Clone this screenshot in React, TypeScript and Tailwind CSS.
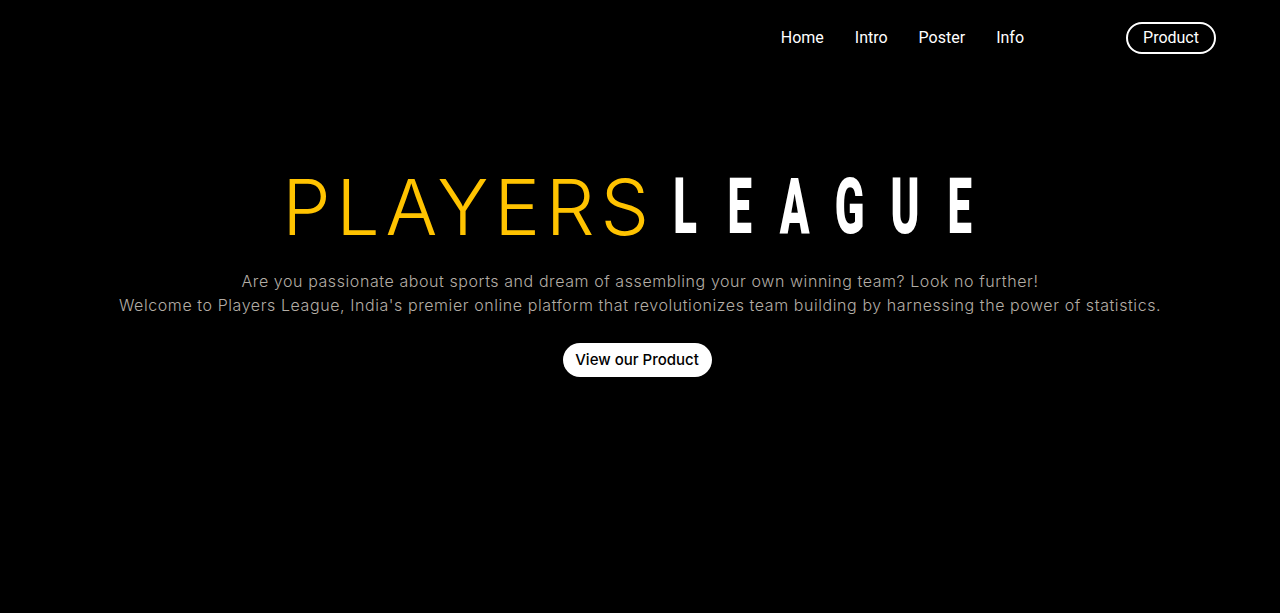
import React from "react";

const league = ["L", "E", "A", "G", "U", "E"];

export default function App() {
  return (
    <div className="min-h-[613px] w-full bg-black text-white">
      <header className="flex h-[76px] items-center justify-end pr-16" style={{ fontFamily: "Roboto, 'Liberation Sans', sans-serif" }}>
        <nav className="flex items-center gap-[31px] text-[16px] text-white">
          <a className="leading-none">Home</a>
          <a className="leading-none">Intro</a>
          <a className="leading-none">Poster</a>
          <a className="leading-none">Info</a>
        </nav>
        <button className="ml-[102px] flex h-8 w-[90px] items-center justify-center rounded-full border-2 border-white text-[16px] leading-none text-white">
          Product
        </button>
      </header>

      <main className="flex flex-col items-center pt-[92px]">
        <h1 className="flex items-center pl-[5px]">
          <span
            className="text-[77px] font-light leading-none tracking-[5.7px] text-[#ffc300]"
            style={{ fontFamily: "Inter, 'Noto Sans', sans-serif" }}
          >
            PLAYERS
          </span>
          <span className="ml-[18px] flex items-center gap-[31px]" style={{ fontFamily: "Roboto, 'Liberation Sans', sans-serif" }}>
            {league.map((l, i) => (
              <span key={i} className="flex w-[24px] justify-center overflow-visible">
                <span className="inline-block scale-x-[0.56] text-[78px] font-black leading-none text-white">{l}</span>
              </span>
            ))}
            <span className="w-0" />
          </span>
        </h1>

        <div
          className="mt-[23px] text-center text-[16px] font-light leading-[24px] tracking-[0.036em] text-[#b3ada5]"
          style={{ fontFamily: "Inter, 'Noto Sans', sans-serif" }}
        >
          <p>Are you passionate about sports and dream of assembling your own winning team? Look no further!</p>
          <p>Welcome to Players League, India's premier online platform that revolutionizes team building by harnessing the power of statistics.</p>
        </div>

        <button
          className="mr-[6px] mt-[26px] flex h-[34px] w-[149px] items-center justify-center rounded-full bg-white text-[15px] font-medium text-black"
          style={{ fontFamily: "Inter, 'Noto Sans', sans-serif" }}
        >
          View our Product
        </button>
      </main>
    </div>
  );
}
